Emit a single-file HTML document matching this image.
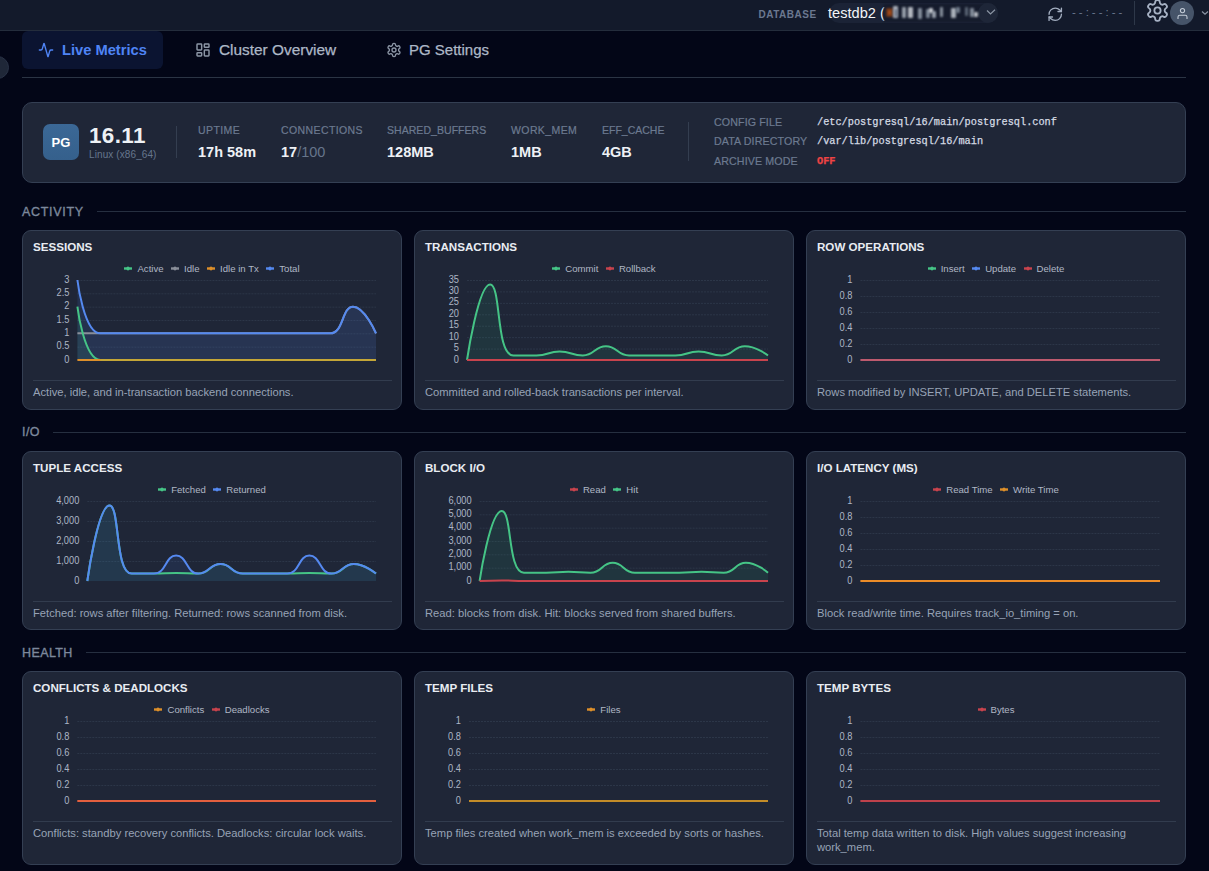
<!DOCTYPE html>
<html><head><meta charset="utf-8"><title>Live Metrics</title><style>
*{box-sizing:border-box;margin:0;padding:0}
html,body{width:1209px;height:871px;overflow:hidden;background:#030617;font-family:"Liberation Sans", sans-serif;}
.abs{position:absolute}
.top{position:absolute;left:0;top:0;width:1209px;height:31px;background:#131a2b;border-bottom:1px solid #242d3c}
.card{position:absolute;background:#1f2637;border:1px solid #343f53;border-radius:9px;overflow:hidden}
.ctitle{position:absolute;left:10px;top:9px;font-size:11.6px;font-weight:bold;color:#e8ecf2;line-height:14px;white-space:nowrap}
.legend{position:absolute;left:0;top:30.5px;width:378px;height:14px;display:flex;justify-content:center;align-items:center}
.li{display:flex;align-items:center;margin:0 3.75px}
.lt{font-size:9.6px;color:#afb7c5;margin-left:5px;line-height:14px;white-space:nowrap}
.chart{position:absolute;left:-1px;top:-1px}
.al{font-family:"Liberation Sans", sans-serif;font-size:10.3px;fill:#adb6c6}
.sep{position:absolute;left:10px;right:9px;top:149px;height:1px;background:#323c4e}
.desc{position:absolute;left:10px;top:154px;width:362px;font-size:11.2px;line-height:14px;color:#97a3b6}
.sec{position:absolute;left:22px;font-size:12.5px;font-weight:normal;-webkit-text-stroke:0.35px #7c889c;color:#7c889c;line-height:14px}
.secline{position:absolute;height:1px;background:#262f40;right:23px}
.lbl{position:absolute;font-size:10.5px;color:#6c7a90;letter-spacing:0.4px;white-space:nowrap;line-height:12px;-webkit-text-stroke:0.2px #6c7a90}
.val{position:absolute;font-size:14.5px;font-weight:bold;color:#eef1f5;white-space:nowrap;line-height:16px;margin-top:1px}
.clbl{position:absolute;left:714px;font-size:10.7px;color:#6c7a90;white-space:nowrap;line-height:12px;letter-spacing:0.1px;-webkit-text-stroke:0.2px #6c7a90}
.cval{position:absolute;left:817px;font-family:"Liberation Mono", monospace;font-size:10.25px;color:#d5dbe4;white-space:nowrap;line-height:12px;-webkit-text-stroke:0.25px currentColor}
</style></head>
<body>
<div class="top"></div>
<div class="abs" style="left:758.5px;top:8.5px;font-size:10px;font-weight:bold;letter-spacing:0.5px;color:#6b7890;line-height:11px">DATABASE</div>
<div class="abs" style="left:829px;top:3px;width:169px;height:20px;border-radius:10px;background:#1b2336"></div>
<div class="abs" style="left:828px;top:5px;font-size:14.6px;color:#f3f5f8;line-height:16px;white-space:nowrap">testdb2 (</div>
<div class="abs" style="left:884px;top:4px;width:100px;height:18px;background:#151b2c;filter:blur(1px)"></div>
<div class="abs" style="left:978px;top:2.5px;width:20px;height:20px;border-radius:50%;background:#1e2638"></div>
<div class="abs" style="left:886px;top:8px;width:7px;height:9px;background:#7a3a18;opacity:0.85;filter:blur(1.1px);border-radius:1px"></div>
<div class="abs" style="left:888px;top:10px;width:3px;height:5px;background:#b4501a;opacity:0.85;filter:blur(1.1px);border-radius:1px"></div>
<div class="abs" style="left:893px;top:6px;width:5px;height:12px;background:#d9dee6;opacity:0.77;filter:blur(1.1px);border-radius:1px"></div>
<div class="abs" style="left:895px;top:9px;width:2px;height:8px;background:#33405a;opacity:0.68;filter:blur(1.1px);border-radius:1px"></div>
<div class="abs" style="left:902px;top:7px;width:4px;height:11px;background:#c8d0da;opacity:0.72;filter:blur(1.1px);border-radius:1px"></div>
<div class="abs" style="left:908px;top:7px;width:5px;height:11px;background:#e2e6ec;opacity:0.77;filter:blur(1.1px);border-radius:1px"></div>
<div class="abs" style="left:918px;top:8px;width:4px;height:11px;background:#b7c2cf;opacity:0.68;filter:blur(1.1px);border-radius:1px"></div>
<div class="abs" style="left:926px;top:9px;width:4px;height:9px;background:#aab6c4;opacity:0.68;filter:blur(1.1px);border-radius:1px"></div>
<div class="abs" style="left:929px;top:8px;width:4px;height:5px;background:#eef1f5;opacity:0.81;filter:blur(1.1px);border-radius:1px"></div>
<div class="abs" style="left:932px;top:11px;width:4px;height:7px;background:#c9d2dc;opacity:0.72;filter:blur(1.1px);border-radius:1px"></div>
<div class="abs" style="left:940px;top:7px;width:3px;height:10px;background:#c0cad5;opacity:0.68;filter:blur(1.1px);border-radius:1px"></div>
<div class="abs" style="left:951px;top:8px;width:5px;height:10px;background:#d5dce4;opacity:0.77;filter:blur(1.1px);border-radius:1px"></div>
<div class="abs" style="left:956px;top:7px;width:4px;height:6px;background:#9aa7b6;opacity:0.68;filter:blur(1.1px);border-radius:1px"></div>
<div class="abs" style="left:965px;top:7px;width:3px;height:9px;background:#8f9cab;opacity:0.59;filter:blur(1.1px);border-radius:1px"></div>
<div class="abs" style="left:970px;top:8px;width:4px;height:9px;background:#b5c0cc;opacity:0.68;filter:blur(1.1px);border-radius:1px"></div>
<div class="abs" style="left:974px;top:12px;width:4px;height:5px;background:#e8ecf1;opacity:0.77;filter:blur(1.1px);border-radius:1px"></div>
<svg class="abs" style="left:986px;top:8px" width="10" height="8" viewBox="0 0 10 8"><path d="M1,2.5 L4.5,6 L9,1.8" fill="none" stroke="#8a94a3" stroke-width="1.2"/></svg>
<svg class="abs" style="left:1047px;top:5.5px" width="16.5" height="16.5" viewBox="0 0 24 24" fill="none" stroke="#a3aec0" stroke-width="1.9" stroke-linecap="round" stroke-linejoin="round"><path d="M3 12a9 9 0 0 1 9-9 9.75 9.75 0 0 1 6.74 2.74L21 8"/><path d="M21 3v5h-5"/><path d="M21 12a9 9 0 0 1-9 9 9.75 9.75 0 0 1-6.74-2.74L3 16"/><path d="M8 16H3v5"/></svg>
<div class="abs" style="left:1072px;top:6px;font-size:11.5px;color:#6b7890;letter-spacing:3px;line-height:13px;white-space:nowrap">--:--:--</div>
<div class="abs" style="left:1134px;top:1px;width:1px;height:24px;background:#2e3849"></div>
<svg class="abs" style="left:1144.8px;top:-2.2px" width="25" height="25" viewBox="0 0 24 24" fill="none" stroke="#a7b2c4" stroke-width="1.75" stroke-linecap="round" stroke-linejoin="round"><path d="M12.22 2h-.44a2 2 0 0 0-2 2v.18a2 2 0 0 1-1 1.73l-.43.25a2 2 0 0 1-2 0l-.15-.08a2 2 0 0 0-2.73.73l-.22.38a2 2 0 0 0 .73 2.73l.15.1a2 2 0 0 1 1 1.72v.51a2 2 0 0 1-1 1.74l-.15.09a2 2 0 0 0-.73 2.73l.22.38a2 2 0 0 0 2.73.73l.15-.08a2 2 0 0 1 2 0l.43.25a2 2 0 0 1 1 1.73V20a2 2 0 0 0 2 2h.44a2 2 0 0 0 2-2v-.18a2 2 0 0 1 1-1.73l.43-.25a2 2 0 0 1 2 0l.15.08a2 2 0 0 0 2.73-.73l.22-.39a2 2 0 0 0-.73-2.73l-.15-.08a2 2 0 0 1-1-1.74v-.5a2 2 0 0 1 1-1.74l.15-.09a2 2 0 0 0 .73-2.73l-.22-.38a2 2 0 0 0-2.73-.73l-.15.08a2 2 0 0 1-2 0l-.43-.25a2 2 0 0 1-1-1.73V4a2 2 0 0 0-2-2z"/><circle cx="12" cy="12" r="3"/></svg>
<div class="abs" style="left:1170px;top:1px;width:24px;height:24px;border-radius:50%;background:#465469"></div>
<svg class="abs" style="left:1176px;top:7px" width="13" height="13" viewBox="0 0 13 13" fill="none" stroke="#c3cbd7" stroke-width="1.1"><circle cx="6.5" cy="3.6" r="2.1"/><path d="M2,12 V10 Q2,8.2 3.8,8.2 H9.2 Q11,8.2 11,10 V12"/></svg>
<svg class="abs" style="left:1201px;top:10px" width="8" height="6" viewBox="0 0 8 6"><path d="M1,1.5 L4,4.3 L7,1.5" fill="none" stroke="#8a94a3" stroke-width="1.2"/></svg>
<div class="abs" style="left:-14.5px;top:55.5px;width:23px;height:23px;border-radius:50%;background:#1f2738;border:1px solid #293246"></div>
<div class="abs" style="left:22px;top:31px;width:141px;height:38px;border-radius:6px;background:#0b1431"></div>
<svg class="abs" style="left:38px;top:42px" width="16" height="16" viewBox="0 0 24 24" fill="none" stroke="#4f84f5" stroke-width="2" stroke-linecap="round" stroke-linejoin="round"><path d="M22 12h-2.48a2 2 0 0 0-1.93 1.46l-2.35 8.36a.25.25 0 0 1-.48 0L9.24 2.18a.25.25 0 0 0-.48 0l-2.35 8.36A2 2 0 0 1 4.49 12H2"/></svg>
<div class="abs" style="left:62px;top:42px;font-size:14.7px;font-weight:bold;color:#4f84f5;line-height:17px;white-space:nowrap">Live Metrics</div>
<svg class="abs" style="left:195px;top:42px" width="16" height="16" viewBox="0 0 24 24" fill="none" stroke="#8c96a6" stroke-width="2.2" stroke-linecap="round" stroke-linejoin="round"><rect width="7" height="9" x="3" y="3" rx="1"/><rect width="7" height="5" x="14" y="3" rx="1"/><rect width="7" height="9" x="14" y="12" rx="1"/><rect width="7" height="5" x="3" y="16" rx="1"/></svg>
<div class="abs" style="left:219px;top:41px;font-size:15.4px;color:#adb8c7;-webkit-text-stroke:0.25px #adb8c7;line-height:17px;white-space:nowrap">Cluster Overview</div>
<svg class="abs" style="left:386px;top:42px" width="16" height="16" viewBox="0 0 24 24" fill="none" stroke="#8c96a6" stroke-width="2" stroke-linecap="round" stroke-linejoin="round"><path d="M12.22 2h-.44a2 2 0 0 0-2 2v.18a2 2 0 0 1-1 1.73l-.43.25a2 2 0 0 1-2 0l-.15-.08a2 2 0 0 0-2.73.73l-.22.38a2 2 0 0 0 .73 2.73l.15.1a2 2 0 0 1 1 1.72v.51a2 2 0 0 1-1 1.74l-.15.09a2 2 0 0 0-.73 2.73l.22.38a2 2 0 0 0 2.73.73l.15-.08a2 2 0 0 1 2 0l.43.25a2 2 0 0 1 1 1.73V20a2 2 0 0 0 2 2h.44a2 2 0 0 0 2-2v-.18a2 2 0 0 1 1-1.73l.43-.25a2 2 0 0 1 2 0l.15.08a2 2 0 0 0 2.73-.73l.22-.39a2 2 0 0 0-.73-2.73l-.15-.08a2 2 0 0 1-1-1.74v-.5a2 2 0 0 1 1-1.74l.15-.09a2 2 0 0 0 .73-2.73l-.22-.38a2 2 0 0 0-2.73-.73l-.15.08a2 2 0 0 1-2 0l-.43-.25a2 2 0 0 1-1-1.73V4a2 2 0 0 0-2-2z"/><circle cx="12" cy="12" r="3"/></svg>
<div class="abs" style="left:409px;top:41px;font-size:15px;color:#adb8c7;-webkit-text-stroke:0.25px #adb8c7;line-height:17px;white-space:nowrap">PG Settings</div>
<div class="abs" style="left:22px;top:77px;width:1164px;height:1px;background:#2b3444"></div>
<div class="card" style="left:22px;top:102px;width:1164px;height:81px;border-radius:10px"></div>
<div class="abs" style="left:43px;top:124px;width:36px;height:36px;border-radius:7px;background:linear-gradient(#3b6896,#35608c)"></div>
<div class="abs" style="left:43px;top:134.5px;width:36px;text-align:center;font-size:13px;font-weight:bold;color:#fff;line-height:16px">PG</div>
<div class="abs" style="left:89px;top:124.5px;font-size:22.4px;letter-spacing:0.4px;font-weight:bold;color:#eef1f5;line-height:22px;white-space:nowrap">16.11</div>
<div class="abs" style="left:89px;top:149px;font-size:10px;letter-spacing:0.1px;color:#66768d;line-height:11px;white-space:nowrap">Linux (x86_64)</div>
<div class="abs" style="left:176px;top:126px;width:1px;height:32px;background:#343e50"></div>
<div class="lbl" style="left:198px;top:124px">UPTIME</div>
<div class="val" style="left:198px;top:143px">17h 58m</div>
<div class="lbl" style="left:281px;top:124px">CONNECTIONS</div>
<div class="val" style="left:281px;top:143px">17<span style="font-weight:normal;color:#66758b">/100</span></div>
<div class="lbl" style="left:387px;top:124px"><span style="letter-spacing:0.05px">SHARED_BUFFERS</span></div>
<div class="val" style="left:387px;top:143px">128MB</div>
<div class="lbl" style="left:511px;top:124px">WORK_MEM</div>
<div class="val" style="left:511px;top:143px">1MB</div>
<div class="lbl" style="left:602px;top:124px"><span style="letter-spacing:0">EFF_CACHE</span></div>
<div class="val" style="left:602px;top:143px">4GB</div>
<div class="abs" style="left:688px;top:122px;width:1px;height:39px;background:#343e50"></div>
<div class="clbl" style="top:116px">CONFIG FILE</div>
<div class="cval" style="top:116px;color:#d5dbe4;font-weight:normal">/etc/postgresql/16/main/postgresql.conf</div>
<div class="clbl" style="top:135px">DATA DIRECTORY</div>
<div class="cval" style="top:135px;color:#d5dbe4;font-weight:normal">/var/lib/postgresql/16/main</div>
<div class="clbl" style="top:155px">ARCHIVE MODE</div>
<div class="cval" style="top:155px;color:#ef4444;font-weight:bold">OFF</div>
<div class="sec" style="top:205px;letter-spacing:0.7px">ACTIVITY</div>
<div class="secline" style="left:97px;top:211px"></div>
<div class="sec" style="top:425px;letter-spacing:0.45px">I/O</div>
<div class="secline" style="left:53px;top:432px"></div>
<div class="sec" style="top:645.5px;letter-spacing:0.4px">HEALTH</div>
<div class="secline" style="left:86px;top:652px"></div>
<div class="card" style="left:22px;top:230px;width:380px;height:180px">
<div class="ctitle">SESSIONS</div>
<div class="legend"><span class="li"><svg width="8" height="5" viewBox="0 0 8 5" style="display:block"><rect x="0" y="1.3" width="8" height="2.4" fill="#45c486"/><ellipse cx="4" cy="2.5" rx="1.6" ry="2" fill="#45c486"/></svg><span class="lt">Active</span></span><span class="li"><svg width="8" height="5" viewBox="0 0 8 5" style="display:block"><rect x="0" y="1.3" width="8" height="2.4" fill="#898e99"/><ellipse cx="4" cy="2.5" rx="1.6" ry="2" fill="#898e99"/></svg><span class="lt">Idle</span></span><span class="li"><svg width="8" height="5" viewBox="0 0 8 5" style="display:block"><rect x="0" y="1.3" width="8" height="2.4" fill="#dd8f2a"/><ellipse cx="4" cy="2.5" rx="1.6" ry="2" fill="#dd8f2a"/></svg><span class="lt">Idle in Tx</span></span><span class="li"><svg width="8" height="5" viewBox="0 0 8 5" style="display:block"><rect x="0" y="1.3" width="8" height="2.4" fill="#5589f0"/><ellipse cx="4" cy="2.5" rx="1.6" ry="2" fill="#5589f0"/></svg><span class="lt">Total</span></span></div>
<svg class="chart" width="380" height="180" viewBox="0 0 380 180"><line x1="55.400000000000006" y1="50.50" x2="354" y2="50.50" stroke="#2c3648" stroke-width="1" stroke-dasharray="2,1"/><text transform="translate(47.40,52.60) scale(0.9,1)" text-anchor="end" class="al">3</text><line x1="55.400000000000006" y1="63.83" x2="354" y2="63.83" stroke="#2c3648" stroke-width="1" stroke-dasharray="2,1"/><text transform="translate(47.40,65.93) scale(0.9,1)" text-anchor="end" class="al">2.5</text><line x1="55.400000000000006" y1="77.17" x2="354" y2="77.17" stroke="#2c3648" stroke-width="1" stroke-dasharray="2,1"/><text transform="translate(47.40,79.27) scale(0.9,1)" text-anchor="end" class="al">2</text><line x1="55.400000000000006" y1="90.50" x2="354" y2="90.50" stroke="#2c3648" stroke-width="1" stroke-dasharray="2,1"/><text transform="translate(47.40,92.60) scale(0.9,1)" text-anchor="end" class="al">1.5</text><line x1="55.400000000000006" y1="103.83" x2="354" y2="103.83" stroke="#2c3648" stroke-width="1" stroke-dasharray="2,1"/><text transform="translate(47.40,105.93) scale(0.9,1)" text-anchor="end" class="al">1</text><line x1="55.400000000000006" y1="117.17" x2="354" y2="117.17" stroke="#2c3648" stroke-width="1" stroke-dasharray="2,1"/><text transform="translate(47.40,119.27) scale(0.9,1)" text-anchor="end" class="al">0.5</text><text transform="translate(47.40,132.60) scale(0.9,1)" text-anchor="end" class="al">0</text><path d="M55.40,103.33 C55.40,103.33 66.88,103.33 78.37,103.33 C89.85,103.33 89.85,103.33 101.34,103.33 C112.82,103.33 112.82,103.33 124.31,103.33 C135.79,103.33 135.79,103.33 147.28,103.33 C158.76,103.33 158.76,103.33 170.25,103.33 C181.73,103.33 181.73,103.33 193.22,103.33 C204.70,103.33 204.70,103.33 216.18,103.33 C227.67,103.33 227.67,103.33 239.15,103.33 C250.64,103.33 250.64,103.33 262.12,103.33 C273.61,103.33 273.61,103.33 285.09,103.33 C296.58,103.33 298.99,103.33 308.06,103.33 C321.96,103.33 319.55,76.67 331.03,76.67 C342.52,76.67 354.00,103.33 354.00,103.33 L354.00,130 L55.40,130 Z" fill="rgba(148,163,184,0.04)"/><path d="M55.40,50.00 C55.40,50.00 61.91,103.33 78.37,103.33 C84.88,103.33 89.85,103.33 101.34,103.33 C112.82,103.33 112.82,103.33 124.31,103.33 C135.79,103.33 135.79,103.33 147.28,103.33 C158.76,103.33 158.76,103.33 170.25,103.33 C181.73,103.33 181.73,103.33 193.22,103.33 C204.70,103.33 204.70,103.33 216.18,103.33 C227.67,103.33 227.67,103.33 239.15,103.33 C250.64,103.33 250.64,103.33 262.12,103.33 C273.61,103.33 273.61,103.33 285.09,103.33 C296.58,103.33 298.99,103.33 308.06,103.33 C321.96,103.33 319.55,76.67 331.03,76.67 C342.52,76.67 354.00,103.33 354.00,103.33 L354.00,130 L55.40,130 Z" fill="rgba(70,120,240,0.13)"/><path d="M55.40,76.67 C55.40,76.67 61.91,130.00 78.37,130.00 C84.88,130.00 89.85,130.00 101.34,130.00 C112.82,130.00 112.82,130.00 124.31,130.00 C135.79,130.00 135.79,130.00 147.28,130.00 C158.76,130.00 158.76,130.00 170.25,130.00 C181.73,130.00 181.73,130.00 193.22,130.00 C204.70,130.00 204.70,130.00 216.18,130.00 C227.67,130.00 227.67,130.00 239.15,130.00 C250.64,130.00 250.64,130.00 262.12,130.00 C273.61,130.00 273.61,130.00 285.09,130.00 C296.58,130.00 296.58,130.00 308.06,130.00 C319.55,130.00 319.55,130.00 331.03,130.00 C342.52,130.00 354.00,130.00 354.00,130.00 L354.00,130 L55.40,130 Z" fill="rgba(52,190,130,0.10)"/><path d="M55.40,103.33 C55.40,103.33 66.88,103.33 78.37,103.33 C89.85,103.33 89.85,103.33 101.34,103.33 C112.82,103.33 112.82,103.33 124.31,103.33 C135.79,103.33 135.79,103.33 147.28,103.33 C158.76,103.33 158.76,103.33 170.25,103.33 C181.73,103.33 181.73,103.33 193.22,103.33 C204.70,103.33 204.70,103.33 216.18,103.33 C227.67,103.33 227.67,103.33 239.15,103.33 C250.64,103.33 250.64,103.33 262.12,103.33 C273.61,103.33 273.61,103.33 285.09,103.33 C296.58,103.33 298.99,103.33 308.06,103.33 C321.96,103.33 319.55,76.67 331.03,76.67 C342.52,76.67 354.00,103.33 354.00,103.33" fill="none" stroke="#898e99" stroke-width="2" stroke-linejoin="round" stroke-linecap="butt"/><path d="M55.40,50.00 C55.40,50.00 61.91,103.33 78.37,103.33 C84.88,103.33 89.85,103.33 101.34,103.33 C112.82,103.33 112.82,103.33 124.31,103.33 C135.79,103.33 135.79,103.33 147.28,103.33 C158.76,103.33 158.76,103.33 170.25,103.33 C181.73,103.33 181.73,103.33 193.22,103.33 C204.70,103.33 204.70,103.33 216.18,103.33 C227.67,103.33 227.67,103.33 239.15,103.33 C250.64,103.33 250.64,103.33 262.12,103.33 C273.61,103.33 273.61,103.33 285.09,103.33 C296.58,103.33 298.99,103.33 308.06,103.33 C321.96,103.33 319.55,76.67 331.03,76.67 C342.52,76.67 354.00,103.33 354.00,103.33" fill="none" stroke="#5589f0" stroke-width="2" stroke-linejoin="round" stroke-linecap="butt"/><path d="M55.40,76.67 C55.40,76.67 61.91,130.00 78.37,130.00 C84.88,130.00 89.85,130.00 101.34,130.00 C112.82,130.00 112.82,130.00 124.31,130.00 C135.79,130.00 135.79,130.00 147.28,130.00 C158.76,130.00 158.76,130.00 170.25,130.00 C181.73,130.00 181.73,130.00 193.22,130.00 C204.70,130.00 204.70,130.00 216.18,130.00 C227.67,130.00 227.67,130.00 239.15,130.00 C250.64,130.00 250.64,130.00 262.12,130.00 C273.61,130.00 273.61,130.00 285.09,130.00 C296.58,130.00 296.58,130.00 308.06,130.00 C319.55,130.00 319.55,130.00 331.03,130.00 C342.52,130.00 354.00,130.00 354.00,130.00" fill="none" stroke="#45c486" stroke-width="2" stroke-linejoin="round" stroke-linecap="butt"/><path d="M55.40,130.00 C55.40,130.00 66.88,130.00 78.37,130.00 C89.85,130.00 89.85,130.00 101.34,130.00 C112.82,130.00 112.82,130.00 124.31,130.00 C135.79,130.00 135.79,130.00 147.28,130.00 C158.76,130.00 158.76,130.00 170.25,130.00 C181.73,130.00 181.73,130.00 193.22,130.00 C204.70,130.00 204.70,130.00 216.18,130.00 C227.67,130.00 227.67,130.00 239.15,130.00 C250.64,130.00 250.64,130.00 262.12,130.00 C273.61,130.00 273.61,130.00 285.09,130.00 C296.58,130.00 296.58,130.00 308.06,130.00 C319.55,130.00 319.55,130.00 331.03,130.00 C342.52,130.00 354.00,130.00 354.00,130.00" fill="none" stroke="#dd8f2a" stroke-width="2" stroke-linejoin="round" stroke-linecap="butt"/><path d="M78.37,130.00 L101.34,130.00 L124.31,130.00 L147.28,130.00 L170.25,130.00 L193.22,130.00 L216.18,130.00 L239.15,130.00 L262.12,130.00 L285.09,130.00 L308.06,130.00 L331.03,130.00 L354.00,130.00" fill="none" stroke="#c4a637" stroke-width="2" stroke-linejoin="round" stroke-linecap="butt"/></svg>
<div class="sep"></div>
<div class="desc">Active, idle, and in-transaction backend connections.</div>
</div>
<div class="card" style="left:414px;top:230px;width:380px;height:180px">
<div class="ctitle">TRANSACTIONS</div>
<div class="legend"><span class="li"><svg width="8" height="5" viewBox="0 0 8 5" style="display:block"><rect x="0" y="1.3" width="8" height="2.4" fill="#45c486"/><ellipse cx="4" cy="2.5" rx="1.6" ry="2" fill="#45c486"/></svg><span class="lt">Commit</span></span><span class="li"><svg width="8" height="5" viewBox="0 0 8 5" style="display:block"><rect x="0" y="1.3" width="8" height="2.4" fill="#c8434d"/><ellipse cx="4" cy="2.5" rx="1.6" ry="2" fill="#c8434d"/></svg><span class="lt">Rollback</span></span></div>
<svg class="chart" width="380" height="180" viewBox="0 0 380 180"><line x1="53" y1="50.50" x2="354" y2="50.50" stroke="#2c3648" stroke-width="1" stroke-dasharray="2,1"/><text transform="translate(45.00,52.60) scale(0.9,1)" text-anchor="end" class="al">35</text><line x1="53" y1="61.93" x2="354" y2="61.93" stroke="#2c3648" stroke-width="1" stroke-dasharray="2,1"/><text transform="translate(45.00,64.03) scale(0.9,1)" text-anchor="end" class="al">30</text><line x1="53" y1="73.36" x2="354" y2="73.36" stroke="#2c3648" stroke-width="1" stroke-dasharray="2,1"/><text transform="translate(45.00,75.46) scale(0.9,1)" text-anchor="end" class="al">25</text><line x1="53" y1="84.79" x2="354" y2="84.79" stroke="#2c3648" stroke-width="1" stroke-dasharray="2,1"/><text transform="translate(45.00,86.89) scale(0.9,1)" text-anchor="end" class="al">20</text><line x1="53" y1="96.21" x2="354" y2="96.21" stroke="#2c3648" stroke-width="1" stroke-dasharray="2,1"/><text transform="translate(45.00,98.31) scale(0.9,1)" text-anchor="end" class="al">15</text><line x1="53" y1="107.64" x2="354" y2="107.64" stroke="#2c3648" stroke-width="1" stroke-dasharray="2,1"/><text transform="translate(45.00,109.74) scale(0.9,1)" text-anchor="end" class="al">10</text><line x1="53" y1="119.07" x2="354" y2="119.07" stroke="#2c3648" stroke-width="1" stroke-dasharray="2,1"/><text transform="translate(45.00,121.17) scale(0.9,1)" text-anchor="end" class="al">5</text><text transform="translate(45.00,132.60) scale(0.9,1)" text-anchor="end" class="al">0</text><path d="M53.00,130.00 C53.00,130.00 64.25,54.57 76.15,54.57 C87.40,54.57 81.64,125.43 99.31,125.43 C104.80,125.43 110.97,125.43 122.46,125.43 C134.12,125.43 134.04,121.54 145.62,121.54 C157.19,121.54 157.53,125.43 168.77,125.43 C180.69,125.43 180.35,116.29 191.92,116.29 C203.50,116.29 203.08,125.43 215.08,125.43 C226.23,125.43 226.65,125.43 238.23,125.43 C249.81,125.43 249.89,125.43 261.38,125.43 C273.04,125.43 272.96,121.54 284.54,121.54 C296.12,121.54 296.45,125.43 307.69,125.43 C319.61,125.43 319.27,116.29 330.85,116.29 C342.42,116.29 354.00,125.43 354.00,125.43 L354.00,130 L53.00,130 Z" fill="rgba(52,190,130,0.10)"/><path d="M53.00,130.00 C53.00,130.00 64.25,54.57 76.15,54.57 C87.40,54.57 81.64,125.43 99.31,125.43 C104.80,125.43 110.97,125.43 122.46,125.43 C134.12,125.43 134.04,121.54 145.62,121.54 C157.19,121.54 157.53,125.43 168.77,125.43 C180.69,125.43 180.35,116.29 191.92,116.29 C203.50,116.29 203.08,125.43 215.08,125.43 C226.23,125.43 226.65,125.43 238.23,125.43 C249.81,125.43 249.89,125.43 261.38,125.43 C273.04,125.43 272.96,121.54 284.54,121.54 C296.12,121.54 296.45,125.43 307.69,125.43 C319.61,125.43 319.27,116.29 330.85,116.29 C342.42,116.29 354.00,125.43 354.00,125.43" fill="none" stroke="#45c486" stroke-width="2" stroke-linejoin="round" stroke-linecap="butt"/><path d="M53.00,130.00 C53.00,130.00 64.58,130.00 76.15,130.00 C87.73,130.00 87.73,130.00 99.31,130.00 C110.88,130.00 110.88,130.00 122.46,130.00 C134.04,130.00 134.04,130.00 145.62,130.00 C157.19,130.00 157.19,130.00 168.77,130.00 C180.35,130.00 180.35,130.00 191.92,130.00 C203.50,130.00 203.50,130.00 215.08,130.00 C226.65,130.00 226.65,130.00 238.23,130.00 C249.81,130.00 249.81,130.00 261.38,130.00 C272.96,130.00 272.96,130.00 284.54,130.00 C296.12,130.00 296.12,130.00 307.69,130.00 C319.27,130.00 319.27,130.00 330.85,130.00 C342.42,130.00 354.00,130.00 354.00,130.00" fill="none" stroke="#c8434d" stroke-width="2" stroke-linejoin="round" stroke-linecap="butt"/></svg>
<div class="sep"></div>
<div class="desc">Committed and rolled-back transactions per interval.</div>
</div>
<div class="card" style="left:806px;top:230px;width:380px;height:180px">
<div class="ctitle">ROW OPERATIONS</div>
<div class="legend"><span class="li"><svg width="8" height="5" viewBox="0 0 8 5" style="display:block"><rect x="0" y="1.3" width="8" height="2.4" fill="#45c486"/><ellipse cx="4" cy="2.5" rx="1.6" ry="2" fill="#45c486"/></svg><span class="lt">Insert</span></span><span class="li"><svg width="8" height="5" viewBox="0 0 8 5" style="display:block"><rect x="0" y="1.3" width="8" height="2.4" fill="#5589f0"/><ellipse cx="4" cy="2.5" rx="1.6" ry="2" fill="#5589f0"/></svg><span class="lt">Update</span></span><span class="li"><svg width="8" height="5" viewBox="0 0 8 5" style="display:block"><rect x="0" y="1.3" width="8" height="2.4" fill="#c8434d"/><ellipse cx="4" cy="2.5" rx="1.6" ry="2" fill="#c8434d"/></svg><span class="lt">Delete</span></span></div>
<svg class="chart" width="380" height="180" viewBox="0 0 380 180"><line x1="54.39999999999998" y1="50.50" x2="354" y2="50.50" stroke="#2c3648" stroke-width="1" stroke-dasharray="2,1"/><text transform="translate(46.40,52.60) scale(0.9,1)" text-anchor="end" class="al">1</text><line x1="54.39999999999998" y1="66.50" x2="354" y2="66.50" stroke="#2c3648" stroke-width="1" stroke-dasharray="2,1"/><text transform="translate(46.40,68.60) scale(0.9,1)" text-anchor="end" class="al">0.8</text><line x1="54.39999999999998" y1="82.50" x2="354" y2="82.50" stroke="#2c3648" stroke-width="1" stroke-dasharray="2,1"/><text transform="translate(46.40,84.60) scale(0.9,1)" text-anchor="end" class="al">0.6</text><line x1="54.39999999999998" y1="98.50" x2="354" y2="98.50" stroke="#2c3648" stroke-width="1" stroke-dasharray="2,1"/><text transform="translate(46.40,100.60) scale(0.9,1)" text-anchor="end" class="al">0.4</text><line x1="54.39999999999998" y1="114.50" x2="354" y2="114.50" stroke="#2c3648" stroke-width="1" stroke-dasharray="2,1"/><text transform="translate(46.40,116.60) scale(0.9,1)" text-anchor="end" class="al">0.2</text><text transform="translate(46.40,132.60) scale(0.9,1)" text-anchor="end" class="al">0</text><path d="M54.40,130.00 C54.40,130.00 65.92,130.00 77.45,130.00 C88.97,130.00 88.97,130.00 100.49,130.00 C112.02,130.00 112.02,130.00 123.54,130.00 C135.06,130.00 135.06,130.00 146.58,130.00 C158.11,130.00 158.11,130.00 169.63,130.00 C181.15,130.00 181.15,130.00 192.68,130.00 C204.20,130.00 204.20,130.00 215.72,130.00 C227.25,130.00 227.25,130.00 238.77,130.00 C250.29,130.00 250.29,130.00 261.82,130.00 C273.34,130.00 273.34,130.00 284.86,130.00 C296.38,130.00 296.38,130.00 307.91,130.00 C319.43,130.00 319.43,130.00 330.95,130.00 C342.48,130.00 354.00,130.00 354.00,130.00" fill="none" stroke="#be5a6e" stroke-width="2" stroke-linejoin="round" stroke-linecap="butt"/></svg>
<div class="sep"></div>
<div class="desc">Rows modified by INSERT, UPDATE, and DELETE statements.</div>
</div>
<div class="card" style="left:22px;top:451px;width:380px;height:179px">
<div class="ctitle">TUPLE ACCESS</div>
<div class="legend"><span class="li"><svg width="8" height="5" viewBox="0 0 8 5" style="display:block"><rect x="0" y="1.3" width="8" height="2.4" fill="#45c486"/><ellipse cx="4" cy="2.5" rx="1.6" ry="2" fill="#45c486"/></svg><span class="lt">Fetched</span></span><span class="li"><svg width="8" height="5" viewBox="0 0 8 5" style="display:block"><rect x="0" y="1.3" width="8" height="2.4" fill="#5589f0"/><ellipse cx="4" cy="2.5" rx="1.6" ry="2" fill="#5589f0"/></svg><span class="lt">Returned</span></span></div>
<svg class="chart" width="380" height="179" viewBox="0 0 380 179"><line x1="65.3" y1="50.50" x2="354" y2="50.50" stroke="#2c3648" stroke-width="1" stroke-dasharray="2,1"/><text transform="translate(57.30,52.60) scale(0.9,1)" text-anchor="end" class="al">4,000</text><line x1="65.3" y1="70.50" x2="354" y2="70.50" stroke="#2c3648" stroke-width="1" stroke-dasharray="2,1"/><text transform="translate(57.30,72.60) scale(0.9,1)" text-anchor="end" class="al">3,000</text><line x1="65.3" y1="90.50" x2="354" y2="90.50" stroke="#2c3648" stroke-width="1" stroke-dasharray="2,1"/><text transform="translate(57.30,92.60) scale(0.9,1)" text-anchor="end" class="al">2,000</text><line x1="65.3" y1="110.50" x2="354" y2="110.50" stroke="#2c3648" stroke-width="1" stroke-dasharray="2,1"/><text transform="translate(57.30,112.60) scale(0.9,1)" text-anchor="end" class="al">1,000</text><text transform="translate(57.30,132.60) scale(0.9,1)" text-anchor="end" class="al">0</text><path d="M65.30,130.00 C65.30,130.00 75.88,54.60 87.51,54.60 C98.09,54.60 92.77,122.60 109.72,122.60 C114.98,122.60 120.82,122.60 131.92,122.60 C143.03,122.60 143.03,122.10 154.13,122.10 C165.23,122.10 165.71,122.60 176.34,122.60 C187.92,122.60 187.44,113.00 198.55,113.00 C209.65,113.00 209.17,122.60 220.75,122.60 C231.38,122.60 231.86,122.60 242.96,122.60 C254.07,122.60 254.07,122.60 265.17,122.60 C276.27,122.60 276.27,122.10 287.38,122.10 C298.48,122.10 298.95,122.60 309.58,122.60 C321.16,122.60 320.69,113.00 331.79,113.00 C342.90,113.00 354.00,122.60 354.00,122.60 L354.00,130 L65.30,130 Z" fill="rgba(52,190,130,0.08)"/><path d="M65.30,130.00 C65.30,130.00 75.88,54.60 87.51,54.60 C98.09,54.60 92.77,122.60 109.72,122.60 C114.98,122.60 122.21,122.60 131.92,122.60 C144.42,122.60 143.03,104.60 154.13,104.60 C165.23,104.60 164.31,122.60 176.34,122.60 C186.52,122.60 187.44,113.00 198.55,113.00 C209.65,113.00 209.17,122.60 220.75,122.60 C231.38,122.60 231.86,122.60 242.96,122.60 C254.07,122.60 255.46,122.60 265.17,122.60 C277.67,122.60 276.27,104.60 287.38,104.60 C298.48,104.60 297.56,122.60 309.58,122.60 C319.76,122.60 320.69,113.00 331.79,113.00 C342.90,113.00 354.00,122.60 354.00,122.60 L354.00,130 L65.30,130 Z" fill="rgba(70,120,240,0.10)"/><path d="M65.30,130.00 C65.30,130.00 75.88,54.60 87.51,54.60 C98.09,54.60 92.77,122.60 109.72,122.60 C114.98,122.60 120.82,122.60 131.92,122.60 C143.03,122.60 143.03,122.10 154.13,122.10 C165.23,122.10 165.71,122.60 176.34,122.60 C187.92,122.60 187.44,113.00 198.55,113.00 C209.65,113.00 209.17,122.60 220.75,122.60 C231.38,122.60 231.86,122.60 242.96,122.60 C254.07,122.60 254.07,122.60 265.17,122.60 C276.27,122.60 276.27,122.10 287.38,122.10 C298.48,122.10 298.95,122.60 309.58,122.60 C321.16,122.60 320.69,113.00 331.79,113.00 C342.90,113.00 354.00,122.60 354.00,122.60" fill="none" stroke="#45c486" stroke-width="2" stroke-linejoin="round" stroke-linecap="butt"/><path d="M65.30,130.00 C65.30,130.00 75.88,54.60 87.51,54.60 C98.09,54.60 92.77,122.60 109.72,122.60 C114.98,122.60 122.21,122.60 131.92,122.60 C144.42,122.60 143.03,104.60 154.13,104.60 C165.23,104.60 164.31,122.60 176.34,122.60 C186.52,122.60 187.44,113.00 198.55,113.00 C209.65,113.00 209.17,122.60 220.75,122.60 C231.38,122.60 231.86,122.60 242.96,122.60 C254.07,122.60 255.46,122.60 265.17,122.60 C277.67,122.60 276.27,104.60 287.38,104.60 C298.48,104.60 297.56,122.60 309.58,122.60 C319.76,122.60 320.69,113.00 331.79,113.00 C342.90,113.00 354.00,122.60 354.00,122.60" fill="none" stroke="#5589f0" stroke-width="2" stroke-linejoin="round" stroke-linecap="butt"/></svg>
<div class="sep"></div>
<div class="desc">Fetched: rows after filtering. Returned: rows scanned from disk.</div>
</div>
<div class="card" style="left:414px;top:451px;width:380px;height:179px">
<div class="ctitle">BLOCK I/O</div>
<div class="legend"><span class="li"><svg width="8" height="5" viewBox="0 0 8 5" style="display:block"><rect x="0" y="1.3" width="8" height="2.4" fill="#c8434d"/><ellipse cx="4" cy="2.5" rx="1.6" ry="2" fill="#c8434d"/></svg><span class="lt">Read</span></span><span class="li"><svg width="8" height="5" viewBox="0 0 8 5" style="display:block"><rect x="0" y="1.3" width="8" height="2.4" fill="#45c486"/><ellipse cx="4" cy="2.5" rx="1.6" ry="2" fill="#45c486"/></svg><span class="lt">Hit</span></span></div>
<svg class="chart" width="380" height="179" viewBox="0 0 380 179"><line x1="65.60000000000002" y1="50.50" x2="354" y2="50.50" stroke="#2c3648" stroke-width="1" stroke-dasharray="2,1"/><text transform="translate(57.60,52.60) scale(0.9,1)" text-anchor="end" class="al">6,000</text><line x1="65.60000000000002" y1="63.83" x2="354" y2="63.83" stroke="#2c3648" stroke-width="1" stroke-dasharray="2,1"/><text transform="translate(57.60,65.93) scale(0.9,1)" text-anchor="end" class="al">5,000</text><line x1="65.60000000000002" y1="77.17" x2="354" y2="77.17" stroke="#2c3648" stroke-width="1" stroke-dasharray="2,1"/><text transform="translate(57.60,79.27) scale(0.9,1)" text-anchor="end" class="al">4,000</text><line x1="65.60000000000002" y1="90.50" x2="354" y2="90.50" stroke="#2c3648" stroke-width="1" stroke-dasharray="2,1"/><text transform="translate(57.60,92.60) scale(0.9,1)" text-anchor="end" class="al">3,000</text><line x1="65.60000000000002" y1="103.83" x2="354" y2="103.83" stroke="#2c3648" stroke-width="1" stroke-dasharray="2,1"/><text transform="translate(57.60,105.93) scale(0.9,1)" text-anchor="end" class="al">2,000</text><line x1="65.60000000000002" y1="117.17" x2="354" y2="117.17" stroke="#2c3648" stroke-width="1" stroke-dasharray="2,1"/><text transform="translate(57.60,119.27) scale(0.9,1)" text-anchor="end" class="al">1,000</text><text transform="translate(57.60,132.60) scale(0.9,1)" text-anchor="end" class="al">0</text><path d="M65.60,130.00 C65.60,130.00 76.07,60.00 87.78,60.00 C98.25,60.00 93.39,121.73 109.97,121.73 C115.58,121.73 121.07,121.73 132.15,121.73 C143.25,121.73 143.25,120.80 154.34,120.80 C165.43,120.80 165.94,121.73 176.52,121.73 C188.12,121.73 187.62,111.73 198.71,111.73 C209.80,111.73 209.29,121.73 220.89,121.73 C231.47,121.73 231.98,121.73 243.08,121.73 C254.17,121.73 254.17,121.73 265.26,121.73 C276.36,121.73 276.35,120.80 287.45,120.80 C298.54,120.80 299.05,121.73 309.63,121.73 C321.23,121.73 320.72,111.73 331.82,111.73 C342.91,111.73 354.00,121.73 354.00,121.73 L354.00,130 L65.60,130 Z" fill="rgba(52,190,130,0.10)"/><path d="M65.60,130.00 C65.60,130.00 76.07,60.00 87.78,60.00 C98.25,60.00 93.39,121.73 109.97,121.73 C115.58,121.73 121.07,121.73 132.15,121.73 C143.25,121.73 143.25,120.80 154.34,120.80 C165.43,120.80 165.94,121.73 176.52,121.73 C188.12,121.73 187.62,111.73 198.71,111.73 C209.80,111.73 209.29,121.73 220.89,121.73 C231.47,121.73 231.98,121.73 243.08,121.73 C254.17,121.73 254.17,121.73 265.26,121.73 C276.36,121.73 276.35,120.80 287.45,120.80 C298.54,120.80 299.05,121.73 309.63,121.73 C321.23,121.73 320.72,111.73 331.82,111.73 C342.91,111.73 354.00,121.73 354.00,121.73" fill="none" stroke="#45c486" stroke-width="2" stroke-linejoin="round" stroke-linecap="butt"/><path d="M65.60,130.00 C65.60,130.00 76.69,129.47 87.78,129.47 C98.88,129.47 98.88,130.00 109.97,130.00 C121.06,130.00 121.06,130.00 132.15,130.00 C143.25,130.00 143.25,130.00 154.34,130.00 C165.43,130.00 165.43,130.00 176.52,130.00 C187.62,130.00 187.62,130.00 198.71,130.00 C209.80,130.00 209.80,130.00 220.89,130.00 C231.98,130.00 231.98,130.00 243.08,130.00 C254.17,130.00 254.17,130.00 265.26,130.00 C276.35,130.00 276.35,130.00 287.45,130.00 C298.54,130.00 298.54,130.00 309.63,130.00 C320.72,130.00 320.72,130.00 331.82,130.00 C342.91,130.00 354.00,130.00 354.00,130.00" fill="none" stroke="#c8434d" stroke-width="2" stroke-linejoin="round" stroke-linecap="butt"/></svg>
<div class="sep"></div>
<div class="desc">Read: blocks from disk. Hit: blocks served from shared buffers.</div>
</div>
<div class="card" style="left:806px;top:451px;width:380px;height:179px">
<div class="ctitle">I/O LATENCY (MS)</div>
<div class="legend"><span class="li"><svg width="8" height="5" viewBox="0 0 8 5" style="display:block"><rect x="0" y="1.3" width="8" height="2.4" fill="#c8434d"/><ellipse cx="4" cy="2.5" rx="1.6" ry="2" fill="#c8434d"/></svg><span class="lt">Read Time</span></span><span class="li"><svg width="8" height="5" viewBox="0 0 8 5" style="display:block"><rect x="0" y="1.3" width="8" height="2.4" fill="#dd8f2a"/><ellipse cx="4" cy="2.5" rx="1.6" ry="2" fill="#dd8f2a"/></svg><span class="lt">Write Time</span></span></div>
<svg class="chart" width="380" height="179" viewBox="0 0 380 179"><line x1="54.39999999999998" y1="50.50" x2="354" y2="50.50" stroke="#2c3648" stroke-width="1" stroke-dasharray="2,1"/><text transform="translate(46.40,52.60) scale(0.9,1)" text-anchor="end" class="al">1</text><line x1="54.39999999999998" y1="66.50" x2="354" y2="66.50" stroke="#2c3648" stroke-width="1" stroke-dasharray="2,1"/><text transform="translate(46.40,68.60) scale(0.9,1)" text-anchor="end" class="al">0.8</text><line x1="54.39999999999998" y1="82.50" x2="354" y2="82.50" stroke="#2c3648" stroke-width="1" stroke-dasharray="2,1"/><text transform="translate(46.40,84.60) scale(0.9,1)" text-anchor="end" class="al">0.6</text><line x1="54.39999999999998" y1="98.50" x2="354" y2="98.50" stroke="#2c3648" stroke-width="1" stroke-dasharray="2,1"/><text transform="translate(46.40,100.60) scale(0.9,1)" text-anchor="end" class="al">0.4</text><line x1="54.39999999999998" y1="114.50" x2="354" y2="114.50" stroke="#2c3648" stroke-width="1" stroke-dasharray="2,1"/><text transform="translate(46.40,116.60) scale(0.9,1)" text-anchor="end" class="al">0.2</text><text transform="translate(46.40,132.60) scale(0.9,1)" text-anchor="end" class="al">0</text><path d="M54.40,130.00 C54.40,130.00 65.92,130.00 77.45,130.00 C88.97,130.00 88.97,130.00 100.49,130.00 C112.02,130.00 112.02,130.00 123.54,130.00 C135.06,130.00 135.06,130.00 146.58,130.00 C158.11,130.00 158.11,130.00 169.63,130.00 C181.15,130.00 181.15,130.00 192.68,130.00 C204.20,130.00 204.20,130.00 215.72,130.00 C227.25,130.00 227.25,130.00 238.77,130.00 C250.29,130.00 250.29,130.00 261.82,130.00 C273.34,130.00 273.34,130.00 284.86,130.00 C296.38,130.00 296.38,130.00 307.91,130.00 C319.43,130.00 319.43,130.00 330.95,130.00 C342.48,130.00 354.00,130.00 354.00,130.00" fill="none" stroke="#eb8c28" stroke-width="2" stroke-linejoin="round" stroke-linecap="butt"/></svg>
<div class="sep"></div>
<div class="desc">Block read/write time. Requires track_io_timing = on.</div>
</div>
<div class="card" style="left:22px;top:671px;width:380px;height:194px">
<div class="ctitle">CONFLICTS &amp; DEADLOCKS</div>
<div class="legend"><span class="li"><svg width="8" height="5" viewBox="0 0 8 5" style="display:block"><rect x="0" y="1.3" width="8" height="2.4" fill="#dd8f2a"/><ellipse cx="4" cy="2.5" rx="1.6" ry="2" fill="#dd8f2a"/></svg><span class="lt">Conflicts</span></span><span class="li"><svg width="8" height="5" viewBox="0 0 8 5" style="display:block"><rect x="0" y="1.3" width="8" height="2.4" fill="#c8434d"/><ellipse cx="4" cy="2.5" rx="1.6" ry="2" fill="#c8434d"/></svg><span class="lt">Deadlocks</span></span></div>
<svg class="chart" width="380" height="194" viewBox="0 0 380 194"><line x1="55.3" y1="50.50" x2="354" y2="50.50" stroke="#2c3648" stroke-width="1" stroke-dasharray="2,1"/><text transform="translate(47.30,52.60) scale(0.9,1)" text-anchor="end" class="al">1</text><line x1="55.3" y1="66.50" x2="354" y2="66.50" stroke="#2c3648" stroke-width="1" stroke-dasharray="2,1"/><text transform="translate(47.30,68.60) scale(0.9,1)" text-anchor="end" class="al">0.8</text><line x1="55.3" y1="82.50" x2="354" y2="82.50" stroke="#2c3648" stroke-width="1" stroke-dasharray="2,1"/><text transform="translate(47.30,84.60) scale(0.9,1)" text-anchor="end" class="al">0.6</text><line x1="55.3" y1="98.50" x2="354" y2="98.50" stroke="#2c3648" stroke-width="1" stroke-dasharray="2,1"/><text transform="translate(47.30,100.60) scale(0.9,1)" text-anchor="end" class="al">0.4</text><line x1="55.3" y1="114.50" x2="354" y2="114.50" stroke="#2c3648" stroke-width="1" stroke-dasharray="2,1"/><text transform="translate(47.30,116.60) scale(0.9,1)" text-anchor="end" class="al">0.2</text><text transform="translate(47.30,132.60) scale(0.9,1)" text-anchor="end" class="al">0</text><path d="M55.30,130.00 C55.30,130.00 66.79,130.00 78.28,130.00 C89.77,130.00 89.77,130.00 101.25,130.00 C112.74,130.00 112.74,130.00 124.23,130.00 C135.72,130.00 135.72,130.00 147.21,130.00 C158.70,130.00 158.70,130.00 170.18,130.00 C181.67,130.00 181.67,130.00 193.16,130.00 C204.65,130.00 204.65,130.00 216.14,130.00 C227.63,130.00 227.63,130.00 239.12,130.00 C250.60,130.00 250.60,130.00 262.09,130.00 C273.58,130.00 273.58,130.00 285.07,130.00 C296.56,130.00 296.56,130.00 308.05,130.00 C319.53,130.00 319.53,130.00 331.02,130.00 C342.51,130.00 354.00,130.00 354.00,130.00" fill="none" stroke="#e35f3e" stroke-width="2" stroke-linejoin="round" stroke-linecap="butt"/></svg>
<div class="sep"></div>
<div class="desc">Conflicts: standby recovery conflicts. Deadlocks: circular lock waits.</div>
</div>
<div class="card" style="left:414px;top:671px;width:380px;height:194px">
<div class="ctitle">TEMP FILES</div>
<div class="legend"><span class="li"><svg width="8" height="5" viewBox="0 0 8 5" style="display:block"><rect x="0" y="1.3" width="8" height="2.4" fill="#dd8f2a"/><ellipse cx="4" cy="2.5" rx="1.6" ry="2" fill="#dd8f2a"/></svg><span class="lt">Files</span></span></div>
<svg class="chart" width="380" height="194" viewBox="0 0 380 194"><line x1="55" y1="50.50" x2="354" y2="50.50" stroke="#2c3648" stroke-width="1" stroke-dasharray="2,1"/><text transform="translate(47.00,52.60) scale(0.9,1)" text-anchor="end" class="al">1</text><line x1="55" y1="66.50" x2="354" y2="66.50" stroke="#2c3648" stroke-width="1" stroke-dasharray="2,1"/><text transform="translate(47.00,68.60) scale(0.9,1)" text-anchor="end" class="al">0.8</text><line x1="55" y1="82.50" x2="354" y2="82.50" stroke="#2c3648" stroke-width="1" stroke-dasharray="2,1"/><text transform="translate(47.00,84.60) scale(0.9,1)" text-anchor="end" class="al">0.6</text><line x1="55" y1="98.50" x2="354" y2="98.50" stroke="#2c3648" stroke-width="1" stroke-dasharray="2,1"/><text transform="translate(47.00,100.60) scale(0.9,1)" text-anchor="end" class="al">0.4</text><line x1="55" y1="114.50" x2="354" y2="114.50" stroke="#2c3648" stroke-width="1" stroke-dasharray="2,1"/><text transform="translate(47.00,116.60) scale(0.9,1)" text-anchor="end" class="al">0.2</text><text transform="translate(47.00,132.60) scale(0.9,1)" text-anchor="end" class="al">0</text><path d="M55.00,130.00 C55.00,130.00 66.50,130.00 78.00,130.00 C89.50,130.00 89.50,130.00 101.00,130.00 C112.50,130.00 112.50,130.00 124.00,130.00 C135.50,130.00 135.50,130.00 147.00,130.00 C158.50,130.00 158.50,130.00 170.00,130.00 C181.50,130.00 181.50,130.00 193.00,130.00 C204.50,130.00 204.50,130.00 216.00,130.00 C227.50,130.00 227.50,130.00 239.00,130.00 C250.50,130.00 250.50,130.00 262.00,130.00 C273.50,130.00 273.50,130.00 285.00,130.00 C296.50,130.00 296.50,130.00 308.00,130.00 C319.50,130.00 319.50,130.00 331.00,130.00 C342.50,130.00 354.00,130.00 354.00,130.00" fill="none" stroke="#c38c28" stroke-width="2" stroke-linejoin="round" stroke-linecap="butt"/></svg>
<div class="sep"></div>
<div class="desc">Temp files created when work_mem is exceeded by sorts or hashes.</div>
</div>
<div class="card" style="left:806px;top:671px;width:380px;height:194px">
<div class="ctitle">TEMP BYTES</div>
<div class="legend"><span class="li"><svg width="8" height="5" viewBox="0 0 8 5" style="display:block"><rect x="0" y="1.3" width="8" height="2.4" fill="#c8434d"/><ellipse cx="4" cy="2.5" rx="1.6" ry="2" fill="#c8434d"/></svg><span class="lt">Bytes</span></span></div>
<svg class="chart" width="380" height="194" viewBox="0 0 380 194"><line x1="54.39999999999998" y1="50.50" x2="354" y2="50.50" stroke="#2c3648" stroke-width="1" stroke-dasharray="2,1"/><text transform="translate(46.40,52.60) scale(0.9,1)" text-anchor="end" class="al">1</text><line x1="54.39999999999998" y1="66.50" x2="354" y2="66.50" stroke="#2c3648" stroke-width="1" stroke-dasharray="2,1"/><text transform="translate(46.40,68.60) scale(0.9,1)" text-anchor="end" class="al">0.8</text><line x1="54.39999999999998" y1="82.50" x2="354" y2="82.50" stroke="#2c3648" stroke-width="1" stroke-dasharray="2,1"/><text transform="translate(46.40,84.60) scale(0.9,1)" text-anchor="end" class="al">0.6</text><line x1="54.39999999999998" y1="98.50" x2="354" y2="98.50" stroke="#2c3648" stroke-width="1" stroke-dasharray="2,1"/><text transform="translate(46.40,100.60) scale(0.9,1)" text-anchor="end" class="al">0.4</text><line x1="54.39999999999998" y1="114.50" x2="354" y2="114.50" stroke="#2c3648" stroke-width="1" stroke-dasharray="2,1"/><text transform="translate(46.40,116.60) scale(0.9,1)" text-anchor="end" class="al">0.2</text><text transform="translate(46.40,132.60) scale(0.9,1)" text-anchor="end" class="al">0</text><path d="M54.40,130.00 C54.40,130.00 65.92,130.00 77.45,130.00 C88.97,130.00 88.97,130.00 100.49,130.00 C112.02,130.00 112.02,130.00 123.54,130.00 C135.06,130.00 135.06,130.00 146.58,130.00 C158.11,130.00 158.11,130.00 169.63,130.00 C181.15,130.00 181.15,130.00 192.68,130.00 C204.20,130.00 204.20,130.00 215.72,130.00 C227.25,130.00 227.25,130.00 238.77,130.00 C250.29,130.00 250.29,130.00 261.82,130.00 C273.34,130.00 273.34,130.00 284.86,130.00 C296.38,130.00 296.38,130.00 307.91,130.00 C319.43,130.00 319.43,130.00 330.95,130.00 C342.48,130.00 354.00,130.00 354.00,130.00" fill="none" stroke="#be414b" stroke-width="2" stroke-linejoin="round" stroke-linecap="butt"/></svg>
<div class="sep"></div>
<div class="desc">Total temp data written to disk. High values suggest increasing<br>work_mem.</div>
</div>
</body></html>
